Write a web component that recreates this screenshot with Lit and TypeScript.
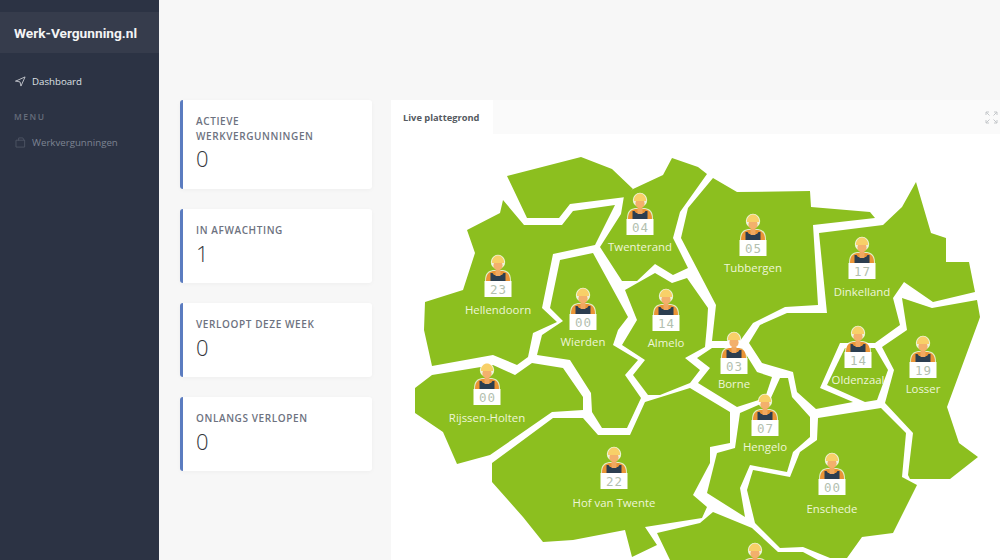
import {LitElement, html, svg, css} from 'lit';
import {customElement} from 'lit/decorators.js';

// outlines are in page pixels, the svg viewBox starts where the card body starts
const REGIONS = [
  '507,176 581,157 612,169 633,189 626,197 570,204 559,218 527,218',
  '633,189 663,175 672,158 698,167 707,174 680,212 673,238 688,268 673,275 655,264 637,281 622,281 600,247 621,214 624,196',
  '503,200 524,225 562,225 573,211 615,205 595,245 553,254 542,308 557,322 533,333 528,357 517,365 493,355 432,366 424,330 425,302 463,290 475,253 467,230 500,213',
  '560,260 593,253 628,317 618,330 613,345 638,360 625,375 641,398 627,428 602,428 592,412 591,393 570,360 537,355 542,335 563,321 550,308',
  '625,290 655,273 672,283 687,278 708,308 707,325 705,347 685,358 700,370 690,383 660,395 648,395 633,375 645,360 622,345 637,320',
  '713,178 737,192 810,191 811,207 870,212 875,218 813,225 818,305 785,307 753,323 740,341 712,341 716,305 681,238 688,208',
  '819,233 883,225 902,207 916,182 931,233 946,238 946,262 969,262 975,292 933,302 904,282 893,298 900,325 875,343 840,343 820,388 853,402 816,409 797,392 793,372 762,363 749,343 760,325 787,313 827,313',
  '845,348 875,348 888,370 877,400 865,402 827,385',
  '902,298 932,308 977,300 980,317 979,320 947,407 959,443 978,457 950,479 910,479 908,475 913,433 885,403 894,370 882,347 907,330',
  '881,408 906,433 902,477 917,485 893,533 862,537 847,558 830,558 803,547 780,548 755,523 747,490 753,470 790,477 800,452 817,440 818,418',
  '780,378 788,378 792,397 810,417 810,437 793,452 787,472 750,465 740,488 745,517 707,493 717,453 735,448 740,413 770,400',
  '712,348 742,348 757,372 772,377 765,398 737,407 698,383 710,368 697,358',
  '492,463 553,418 583,418 598,435 630,435 645,402 690,388 730,412 730,443 710,447 710,463 693,495 707,507 702,518 645,527 657,545 632,557 625,530 573,540 543,542 523,517 492,482',
  '415,388 432,375 493,365 515,375 532,363 563,368 583,397 583,410 552,412 490,455 457,464 443,432 415,413',
  '657,533 700,523 713,512 752,528 778,552 803,552 818,560 670,560',
];

const PINS = [
  {name: 'Twenterand', count: '04', x: 640, y: 219, ly: 246},
  {name: 'Hellendoorn', count: '23', x: 498, y: 281, ly: 309},
  {name: 'Tubbergen', count: '05', x: 753, y: 240, ly: 267},
  {name: 'Dinkelland', count: '17', x: 862, y: 263, ly: 291},
  {name: 'Wierden', count: '00', x: 583, y: 314, ly: 341},
  {name: 'Almelo', count: '14', x: 666, y: 315, ly: 342},
  {name: 'Borne', count: '03', x: 734, y: 358, ly: 383},
  {name: 'Oldenzaal', count: '14', x: 858, y: 352, ly: 379},
  {name: 'Losser', count: '19', x: 923, y: 362, ly: 388},
  {name: 'Hengelo', count: '07', x: 765, y: 420, ly: 446},
  {name: 'Enschede', count: '00', x: 832, y: 479, ly: 508},
  {name: 'Rijssen-Holten', count: '00', x: 487, y: 389, ly: 417},
  {name: 'Hof van Twente', count: '22', x: 614, y: 473, ly: 502},
  {name: '', count: '', x: 755, y: 569, ly: 0},
];

const STATS = [
  {label: 'Actieve werkvergunningen', value: '0'},
  {label: 'In afwachting', value: '1'},
  {label: 'Verloopt deze week', value: '0'},
  {label: 'Onlangs verlopen', value: '0'},
];

@customElement('app-root')
export class AppRoot extends LitElement {
  static override styles = css`
    :host {
      display: flex;
      width: 1000px;
      height: 560px;
      overflow: hidden;
      background: #f7f7f7;
      font-family: "Open Sans", sans-serif;
    }

    .sidebar {
      width: 159px;
      flex: none;
      padding-top: 12px;
      box-sizing: border-box;
      background: #2c3344;
    }
    .brand {
      height: 41px;
      display: flex;
      align-items: center;
      padding-left: 14px;
      background: #363c4c;
      color: #f4f4f5;
      font-family: Roboto, sans-serif;
      font-weight: 700;
      font-size: 13.7px;
    }
    .nav-item {
      display: flex;
      align-items: center;
      gap: 6px;
      padding-left: 15px;
      font-size: 9.7px;
      color: #dfe1e5;
    }
    .nav-item svg {
      width: 11px;
      height: 11px;
      flex: none;
      fill: none;
      stroke: currentColor;
      stroke-width: 1.7;
      stroke-linecap: round;
      stroke-linejoin: round;
    }
    .nav-item.first {
      margin-top: 22px;
    }
    .nav-item.dim {
      margin-top: 14px;
      color: #7d8492;
    }
    .nav-item.dim svg {
      color: #535a69;
    }
    .menu-title {
      margin-top: 23px;
      padding-left: 14px;
      font-size: 8.5px;
      font-weight: 600;
      letter-spacing: 1.5px;
      color: #666d7b;
    }

    .main {
      flex: 1;
      display: flex;
      gap: 19px;
      padding: 100px 0 0 21px;
      min-width: 0;
    }
    .stats {
      width: 192px;
      flex: none;
      display: flex;
      flex-direction: column;
      gap: 20px;
    }
    .stat {
      box-sizing: border-box;
      height: 74px;
      padding: 14px 30px 0 13px;
      background: #fff;
      border-left: 3px solid #5b7cc0;
      border-radius: 3px;
      box-shadow: 0 1px 4px rgba(0, 0, 0, 0.04);
    }
    .stat.tall {
      height: 89px;
    }
    .stat-label {
      font-size: 10px;
      line-height: 14.5px;
      font-weight: 600;
      letter-spacing: 0.6px;
      text-transform: uppercase;
      color: #6d7280;
    }
    .stat-value {
      font-size: 22px;
      font-weight: 300;
      line-height: 30px;
      color: #33363b;
    }

    .map-card {
      flex: 1;
      min-width: 0;
      display: flex;
      flex-direction: column;
      background: #fff;
    }
    .map-head {
      height: 34px;
      flex: none;
      display: flex;
      justify-content: space-between;
      align-items: center;
      background: #fafafa;
    }
    .tab {
      height: 100%;
      width: 102px;
      box-sizing: border-box;
      display: flex;
      align-items: center;
      padding-left: 12px;
      background: #fff;
      font-size: 9.3px;
      font-weight: 700;
      color: #555a61;
    }
    .expand {
      width: 13px;
      height: 13px;
      margin-right: 2px;
      fill: none;
      stroke: #c4c7ca;
      stroke-width: 1;
    }
    .map {
      display: block;
      width: 609px;
      height: 426px;
    }
    .region {
      fill: #8cbf1f;
    }
    .place {
      font-size: 11.4px;
      fill: #eef6d8;
      text-anchor: middle;
      dominant-baseline: central;
    }
    .count {
      font-family: "DejaVu Sans Mono", monospace;
      font-size: 12.5px;
      letter-spacing: 1px;
      fill: #b3bfb0;
      text-anchor: middle;
      dominant-baseline: central;
    }
  `;

  private _pin(p: (typeof PINS)[number]) {
    return svg`
      <g transform="translate(${p.x} ${p.y})">
        <path d="M-13 0 C-13 -8 -10 -10 -5 -11 L5 -11 C10 -10 13 -8 13 0 Z" fill="#fff" opacity="0.75"/>
        <circle cx="0" cy="-19" r="7.2" fill="#fff" opacity="0.85"/>
        <path d="M-12 0 C-12 -7 -9 -9 -5 -10 L5 -10 C9 -9 12 -7 12 0 Z" fill="#ea9436"/>
        <path d="M-7.5 0 L-7.5 -8 L-5.5 -8 L-4 -6 L4 -6 L5.5 -8 L7.5 -8 L7.5 0 Z" fill="#2c3e50"/>
        <rect x="-2.5" y="-11" width="5" height="6" fill="#f0a860"/>
        <ellipse cx="0" cy="-15.5" rx="4.6" ry="5" fill="#f3b06c"/>
        <path d="M-6.2 -18 C-6.2 -23 -3 -25.5 0 -25.5 C3 -25.5 6.2 -23 6.2 -18 Z" fill="#f8d068"/>
        <rect x="-13.5" y="0" width="27" height="16" fill="#fff"/>
        ${p.count ? svg`<text class="count" x="0.5" y="8.5">${p.count}</text>` : ''}
      </g>
      ${p.name ? svg`<text class="place" x=${p.x} y=${p.ly}>${p.name}</text>` : ''}
    `;
  }

  override render() {
    return html`
      <aside class="sidebar">
        <div class="brand">Werk-Vergunning.nl</div>
        <div class="nav-item first">
          <svg viewBox="0 0 24 24"><polygon points="2 11 22 2 13 22 11 13 2 11"/></svg>
          Dashboard
        </div>
        <div class="menu-title">MENU</div>
        <div class="nav-item dim">
          <svg viewBox="0 0 24 24"><path d="M3 7 h18 v15 h-18 Z M8 7 v-5 h9 l3 5"/></svg>
          Werkvergunningen
        </div>
      </aside>
      <div class="main">
        <div class="stats">
          ${STATS.map((s, i) => html`
            <div class="stat ${i === 0 ? 'tall' : ''}">
              <div class="stat-label">${s.label}</div>
              <div class="stat-value">${s.value}</div>
            </div>
          `)}
        </div>
        <section class="map-card">
          <div class="map-head">
            <div class="tab">Live plattegrond</div>
            <svg class="expand" viewBox="0 0 13 13">
              <path d="M1 4 V1 H4 M1 1 L4.5 4.5 M9 1 H12 V4 M12 1 L8.5 4.5 M1 9 V12 H4 M1 12 L4.5 8.5 M12 9 V12 H9 M12 12 L8.5 8.5"/>
            </svg>
          </div>
          <svg class="map" viewBox="391 134 609 426">
            ${REGIONS.map((r) => svg`<polygon class="region" points=${r}/>`)}
            ${PINS.map((p) => this._pin(p))}
          </svg>
        </section>
      </div>
    `;
  }
}

declare global {
  interface HTMLElementTagNameMap {
    'app-root': AppRoot;
  }
}
